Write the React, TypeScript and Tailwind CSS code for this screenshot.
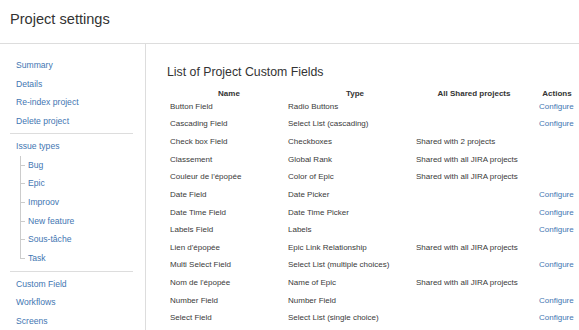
import React from "react";

/* ---------------------------------- data ---------------------------------- */
const topLinks = ["Summary", "Details", "Re-index project", "Delete project"];
const issueTypes = ["Bug", "Epic", "Improov", "New feature", "Sous-tâche", "Task"];
const bottomLinks = ["Custom Field", "Workflows", "Screens"];

type Field = { name: string; type: string; shared?: string; configure?: boolean };

const fields: Field[] = [
  { name: "Button Field", type: "Radio Buttons", configure: true },
  { name: "Cascading Field", type: "Select List (cascading)", configure: true },
  { name: "Check box Field", type: "Checkboxes", shared: "Shared with 2 projects" },
  { name: "Classement", type: "Global Rank", shared: "Shared with all JIRA projects" },
  { name: "Couleur de l'épopée", type: "Color of Epic", shared: "Shared with all JIRA projects" },
  { name: "Date Field", type: "Date Picker", configure: true },
  { name: "Date Time Field", type: "Date Time Picker", configure: true },
  { name: "Labels Field", type: "Labels", configure: true },
  { name: "Lien d'épopée", type: "Epic Link Relationship", shared: "Shared with all JIRA projects" },
  { name: "Multi Select Field", type: "Select List (multiple choices)", configure: true },
  { name: "Nom de l'épopée", type: "Name of Epic", shared: "Shared with all JIRA projects" },
  { name: "Number Field", type: "Number Field", configure: true },
  { name: "Select Field", type: "Select List (single choice)", configure: true },
];

/* --------------------------------- sidebar --------------------------------- */
function NavLink({ label }: { label: string }) {
  return (
    <a className="block h-[18.6px] leading-[18.6px] pl-[16px] text-[#3f76b2] whitespace-nowrap">
      {label}
    </a>
  );
}

function Divider() {
  return <div className="ml-[10px] w-[123px] h-px bg-[#dddddd] mt-[3px] mb-[3px]" />;
}

function Sidebar() {
  return (
    <nav className="w-[146px] shrink-0 border-r border-[#dddddd] pt-[12px] text-[8.6px]">
      {topLinks.map((l) => (
        <NavLink key={l} label={l} />
      ))}
      <Divider />
      <NavLink label="Issue types" />
      <ul>
        {issueTypes.map((t, i) => {
          const last = i === issueTypes.length - 1;
          return (
            <li key={t} className="relative flex items-center h-[18.6px] pl-[20px]">
              <span
                className={
                  last
                    ? "absolute left-[20px] top-0 h-[9.3px] w-px bg-[#cccccc]"
                    : "absolute left-[20px] top-0 h-full w-px bg-[#cccccc]"
                }
              />
              <span className="w-[5px] h-px bg-[#cccccc] mr-[3px]" />
              <a className="text-[#3f76b2] whitespace-nowrap">{t}</a>
            </li>
          );
        })}
      </ul>
      <Divider />
      {bottomLinks.map((l) => (
        <NavLink key={l} label={l} />
      ))}
    </nav>
  );
}

/* ---------------------------------- table ---------------------------------- */
function FieldsTable() {
  const cols = "grid grid-cols-[118px_128px_123px_36px]";
  return (
    <div className="pl-[24px] text-[8px] text-[#3a3a3a]">
      <div className={`${cols} h-[9px] leading-[9px] font-bold text-[#333333]`}>
        <div className="text-center">Name</div>
        <div className="text-center pl-[6px]">Type</div>
        <div className="text-center pr-[7px]">All Shared projects</div>
        <div className="text-center">Actions</div>
      </div>
      {fields.map((f) => (
        <div key={f.name} className={`${cols} h-[17.63px] items-center whitespace-nowrap`}>
          <div>{f.name}</div>
          <div>{f.type}</div>
          <div>{f.shared ?? ""}</div>
          <div>{f.configure && <a className="text-[#3f76b2]">Configure</a>}</div>
        </div>
      ))}
    </div>
  );
}

/* ---------------------------------- render --------------------------------- */
export default function App() {
  return (
    <div
      className="min-h-screen flex flex-col bg-white text-[#333333]"
      style={{ fontFamily: '"Liberation Sans", Arial, sans-serif' }}
    >
      <header className="h-[44px] shrink-0 border-b border-[#dddddd] pl-[10px] pt-[10px]">
        <h1 className="text-[14.6px] leading-[18px] text-[#333333]">Project settings</h1>
      </header>
      <div className="flex flex-1">
        <Sidebar />
        <main className="flex-1 pt-[20px] overflow-hidden">
          <h2 className="pl-[21px] text-[12.3px] leading-[16px] mb-[9px]">
            List of Project Custom Fields
          </h2>
          <FieldsTable />
        </main>
      </div>
    </div>
  );
}
